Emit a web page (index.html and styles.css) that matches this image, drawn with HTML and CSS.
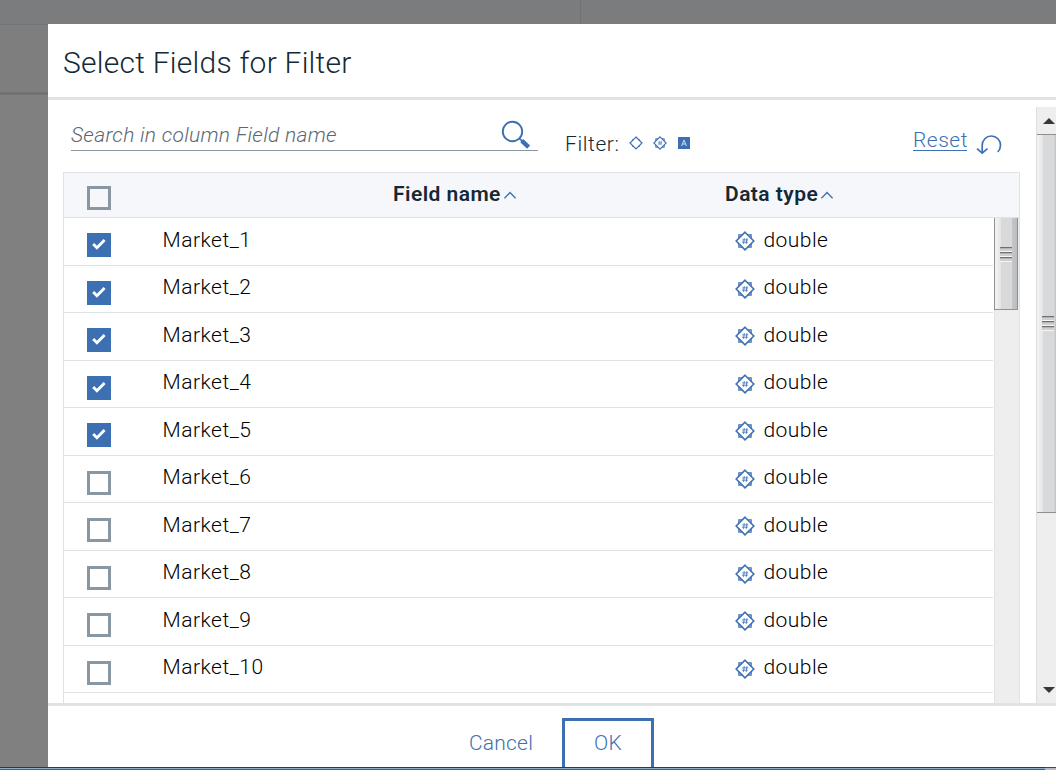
FILE: index.html
```html
<!DOCTYPE html>
<html lang="en">
<head>
<meta charset="utf-8">
<title>Select Fields for Filter</title>
<link rel="stylesheet" href="styles.css">
</head>
<body>
<svg class="defs" width="0" height="0">
  <symbol id="double" viewBox="0 0 20 20">
    <path d="M3.900 3.900h12.200v12.200H3.900Z" fill="none" stroke="#3d70b2" stroke-width="1.300"/>
    <path d="M10 1.200 18.800 10 10 18.800 1.200 10Z" fill="#fff" stroke="#3d70b2" stroke-width="1.600"/>
    <path d="M9.300 7 8.500 13M12 7 11.200 13M7.200 8.900h6M6.900 11.200h6" fill="none" stroke="#3d70b2" stroke-width=".8"/>
  </symbol>
  <symbol id="caret" viewBox="0 0 12 8"><path d="M.4 7.300 6 1.600 11.600 7.300" fill="none" stroke="#3d70b2" stroke-width="1.400"/></symbol>
</svg>
<div class="screen">
  <div class="page-top"><div class="page-top-left"></div></div>
  <div class="page-body">
    <div class="page-side"><div class="side-head"></div></div>
    <div class="dialog">
      <header class="dialog-head"><h1>Select Fields for Filter</h1></header>
      <div class="dialog-body">
        <div class="content">
          <div class="toolbar">
            <div class="search"><span class="placeholder">Search in column Field name</span>
              <svg class="search-icon" width="30" height="30" viewBox="0 0 30 30"><circle cx="11.500" cy="11.500" r="9.700" fill="none" stroke="#3d70b2" stroke-width="1.900"/><path d="m18.300 18.300 2.800 2.800" stroke="#3d70b2" stroke-width="1.600"/><path d="m20.700 20.700 6.900 6.500" stroke="#3d70b2" stroke-width="4.400"/></svg>
            </div>
            <div class="filter"><span class="filter-label">Filter:</span>
              <svg width="14" height="14" viewBox="0 0 14 14"><path d="M3.200 3.200h7.600v7.600H3.200Z" fill="#3d70b2"/><path d="m7 1 6 6-6 6-6-6Z" fill="#fff" stroke="#3d70b2" stroke-width="1.200"/></svg>
              <svg width="14" height="14" viewBox="0 0 20 20"><use href="#double"/></svg>
              <svg width="12" height="12" viewBox="0 0 12 12"><path d="M0 0h12v12H0z" fill="#3d70b2"/><path d="m3.600 9 2.400-6 2.400 6M4.400 7h3.200" fill="none" stroke="#dce5f1" stroke-width=".9"/></svg>
            </div>
            <div class="reset"><a>Reset</a>
              <svg width="26" height="21" viewBox="0 0 26 21"><path d="M6.200 18.800v-7.500A9.200 9.200 0 0 1 15.400 2a9.200 9.200 0 0 1 9.100 9.300c0 2.700-1 4.900-2.700 6.700" fill="none" stroke="#3d70b2" stroke-width="1.700"/><path d="m1 14.600 5.200 4.600 5.300-4.600" fill="none" stroke="#3d70b2" stroke-width="1.700"/></svg>
            </div>
          </div>
          <div class="table">
            <div class="thead">
              <span class="box"></span>
              <div class="th th-name">Field name<svg width="12" height="8"><use href="#caret"/></svg></div>
              <div class="th th-type">Data type<svg width="12" height="8"><use href="#caret"/></svg></div>
            </div>
            <div class="tbody">
              <div class="rows">
                <div class="row"><span class="box on"><svg width="24" height="24"><path d="m6.200 11 3.700 3.700 7.700-7.700" fill="none" stroke="#fff" stroke-width="2.800"/></svg></span><span class="name">Market_1</span><svg class="type-icon" width="20" height="20"><use href="#double"/></svg><span class="type">double</span></div>
                <div class="row"><span class="box on"><svg width="24" height="24"><path d="m6.200 11 3.700 3.700 7.700-7.700" fill="none" stroke="#fff" stroke-width="2.800"/></svg></span><span class="name">Market_2</span><svg class="type-icon" width="20" height="20"><use href="#double"/></svg><span class="type">double</span></div>
                <div class="row"><span class="box on"><svg width="24" height="24"><path d="m6.200 11 3.700 3.700 7.700-7.700" fill="none" stroke="#fff" stroke-width="2.800"/></svg></span><span class="name">Market_3</span><svg class="type-icon" width="20" height="20"><use href="#double"/></svg><span class="type">double</span></div>
                <div class="row"><span class="box on"><svg width="24" height="24"><path d="m6.200 11 3.700 3.700 7.700-7.700" fill="none" stroke="#fff" stroke-width="2.800"/></svg></span><span class="name">Market_4</span><svg class="type-icon" width="20" height="20"><use href="#double"/></svg><span class="type">double</span></div>
                <div class="row"><span class="box on"><svg width="24" height="24"><path d="m6.200 11 3.700 3.700 7.700-7.700" fill="none" stroke="#fff" stroke-width="2.800"/></svg></span><span class="name">Market_5</span><svg class="type-icon" width="20" height="20"><use href="#double"/></svg><span class="type">double</span></div>
                <div class="row"><span class="box"></span><span class="name">Market_6</span><svg class="type-icon" width="20" height="20"><use href="#double"/></svg><span class="type">double</span></div>
                <div class="row"><span class="box"></span><span class="name">Market_7</span><svg class="type-icon" width="20" height="20"><use href="#double"/></svg><span class="type">double</span></div>
                <div class="row"><span class="box"></span><span class="name">Market_8</span><svg class="type-icon" width="20" height="20"><use href="#double"/></svg><span class="type">double</span></div>
                <div class="row"><span class="box"></span><span class="name">Market_9</span><svg class="type-icon" width="20" height="20"><use href="#double"/></svg><span class="type">double</span></div>
                <div class="row"><span class="box"></span><span class="name">Market_10</span><svg class="type-icon" width="20" height="20"><use href="#double"/></svg><span class="type">double</span></div>
              </div>
              <div class="inner-bar"><div class="thumb"><span class="grip"></span></div></div>
            </div>
          </div>
        </div>
        <div class="outer-bar">
          <svg class="arrow" width="12" height="6"><path d="M0 6 6 0l6 6Z" fill="#383838"/></svg>
          <div class="thumb outer"><span class="grip"></span></div>
          <svg class="arrow down" width="12" height="6"><path d="M0 0h12L6 6Z" fill="#383838"/></svg>
        </div>
      </div>
      <footer class="dialog-foot"><button class="cancel">Cancel</button><button class="ok">OK</button></footer>
    </div>
  </div>
  <div class="taskbar"><div class="taskbar-end"></div></div>
</div>
</body>
</html>
```
FILE: styles.css
```css
* { box-sizing: border-box; }
body { margin: 0; font-family: Roboto, "Open Sans", sans-serif; font-weight: 300; font-size: 21px; color: #000; overflow: hidden; }
svg { display: block; flex: none; }
.defs { position: absolute; }
.screen { width: 1056px; height: 770px; display: flex; flex-direction: column; background: #808080; overflow: hidden; }
.page-top { height: 24px; flex: none; background: #7b7c7d; }
.page-top-left { width: 581px; height: 24px; border-right: 1px solid #707172; }
.page-body { height: 743px; display: flex; }
.page-side { width: 48px; flex: none; border-top: 1px solid #747576; }
.side-head { height: 70px; border-bottom: 3px solid #707274; background: #7e7e7e; }
.dialog { width: 1008px; background: #fff; display: flex; flex-direction: column; }
.dialog-head { height: 76px; flex: none; border-bottom: 3px solid #dfe3e6; padding: 21px 0 0 15px; }
h1 { margin: 0; font-size: 30px; font-weight: 300; line-height: 36px; color: #152935; letter-spacing: .24px; white-space: nowrap; }
.dialog-body { height: 603px; flex: none; display: flex; }
.content { width: 988px; flex: none; padding-left: 15px; overflow: hidden; }
.toolbar { height: 72px; display: flex; }
.search { width: 467px; height: 51px; flex: none; margin-left: 8px; border-bottom: 1px solid #8897a2; display: flex; justify-content: space-between; padding: 19px 7px 0 0; }
.placeholder { color: #5a6872; font-style: italic; line-height: 32px; letter-spacing: .29px; white-space: nowrap; }
.search-icon { margin-top: 1px; }
.filter { width: 375px; flex: none; padding: 31px 0 0 27px; display: flex; color: #152935; line-height: 26px; letter-spacing: .6px; }
.filter svg { margin: 5px 10px 0 0; }
.filter svg:last-child { margin: 6px 0 0 1px; }
.filter-label { width: 64px; }
.reset { display: flex; color: #3d70b2; padding-top: 28px; line-height: 24px; }
.reset a { width: 54px; height: 23px; border-bottom: 1px solid #3d70b2; letter-spacing: .5px; }
.reset svg { margin: 6px 0 0 9px; }
.table { width: 957px; height: 531px; border: 1px solid #dfe3e6; border-bottom: 0; }
.thead { height: 45px; background: #f5f7fb; border-bottom: 1px solid #dfe3e6; display: flex; color: #152935; font-weight: 600; line-height: 42px; }
.box { width: 24px; height: 24px; flex: none; margin-left: 23px; border: 3px solid #8897a2; }
.thead .box { margin-top: 13px; }
.th { display: flex; white-space: nowrap; letter-spacing: .45px; }
.th svg { margin-top: 18px; margin-left: 3px; }
.th-name { width: 332px; margin-left: 282px; }
.tbody { display: flex; height: 485px; overflow: hidden; }
.rows { width: 929px; flex: none; margin-right: 1px; }
.row { height: 47.5px; border-bottom: 1px solid #dfe3e6; display: flex; line-height: 43.4px; letter-spacing: .5px; }
.row:nth-child(odd) { line-height: 44px; }
.row .box { margin-top: 15px; }
.box.on { border: 0; background: #3d70b2; }
.name { width: 623px; flex: none; padding-left: 51.5px; }
.type-icon { margin: 13px 0 0 .5px; }
.type { margin-left: 9px; letter-spacing: .45px; }
.inner-bar { width: 25px; background: #eee; border-left: 1px solid #e3e3e3; }
.thumb { width: 24px; height: 92px; margin-left: -1px; display: flex; align-items: center; justify-content: center; border: 1px solid #8f9092; border-top: 0; background: linear-gradient(90deg, #f3f3f3 0, #e6e6e7 25%, #d8d9db 27%, #d8d9db 75%, #c5c6c9 78%, #bbbcc0 100%); }
.grip { width: 12px; height: 15px; margin-bottom: 19px; background: repeating-linear-gradient(#707070 0 1px, #b4b4b4 1px 2px, #cfcfcf 2px 4px, #f5f5f5 4px 5px); }
.outer-bar { width: 20px; height: 596px; margin-top: 7px; background: #eee; border-left: 1px solid #dedede; overflow: hidden; }
.arrow { margin: 11px 0 10px 6px; }
.thumb.outer { width: 25px; height: 379px; margin-left: -1px; border-top: 1px solid #8f9092; }
.outer .grip { margin-bottom: 0; margin-right: 2px; }
.arrow.down { margin: 174px 0 0 6px; }
.dialog-foot { height: 64px; flex: none; border-top: 3px solid #dfe3e6; display: flex; padding: 12px 0 0 421px; overflow: hidden; }
button { font: inherit; color: #3d70b2; background: none; border: 0; padding: 0; letter-spacing: .2px; line-height: 24px; }
.cancel { width: 64px; height: 49px; white-space: nowrap; text-align: left; }
.ok { width: 92px; height: 60px; margin-left: 29px; border: 3px solid #3d70b2; flex: none; padding-bottom: 11px; }
.taskbar { height: 3px; background: linear-gradient(#293a4b 0 1px, #8faccd 1px 2px, #455f83 2px); }
.taskbar-end { width: 11px; height: 3px; margin-left: auto; background: linear-gradient(#404953 0 1px, #b5bbc2 1px); }
```
